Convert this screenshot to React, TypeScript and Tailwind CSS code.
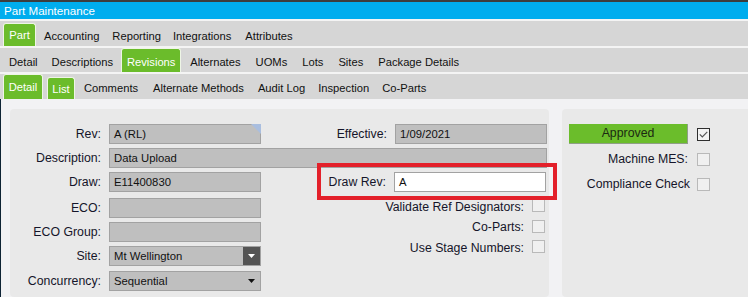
import React from "react";

const CB = ({ checked = false }: { checked?: boolean }) =>
  checked ? (
    <div className="flex h-[13px] w-[13px] shrink-0 items-center justify-center border border-[#2e2e2e] bg-[#f3f3f3]">
      <svg width="9" height="7" viewBox="0 0 9 7">
        <path d="M0.8 3.4 L3.3 5.9 L8.3 0.8" fill="none" stroke="#555" strokeWidth="1.2" />
      </svg>
    </div>
  ) : (
    <div className="h-[13px] w-[13px] shrink-0 border border-[#b9b9b9] bg-[#f0f0f0]" />
  );

const Input = ({
  w,
  value,
  white = false,
  children,
}: {
  w: string;
  value?: string;
  white?: boolean;
  children?: React.ReactNode;
}) => (
  <div
    className={`relative flex h-[20px] shrink-0 items-center border border-[#a2a2a2] pl-[4px] text-[11.3px] text-[#111] ${w} ${
      white ? "bg-white" : "bg-[#bfbfbf]"
    }`}
  >
    {value}
    {children}
  </div>
);

const Label = ({ w, children }: { w: string; children: React.ReactNode }) => (
  <div className={`shrink-0 text-right text-[12.3px] text-[#15152a] ${w}`}>{children}</div>
);

const Tab = ({ children, className = "" }: { children: React.ReactNode; className?: string }) => (
  <div
    className={`flex justify-center rounded-t-[3px] border border-b-0 border-[#eef5e6] bg-[#6bbc2b] leading-[14px] text-white ${className}`}
  >
    {children}
  </div>
);

export default function App() {
  return (
    <div className="h-[297px] w-[748px] overflow-hidden bg-[#f2f2f4] font-['Liberation_Sans',Arial,sans-serif]">
      <div className="h-[2px] bg-[#3d3d3d]" />
      <div className="h-[17px] bg-[#00adee] pl-[4px] text-[11.6px] leading-[17px] text-white">Part Maintenance</div>
      <div className="h-[2px] bg-[#f4f4f4]" />

      {/* Row 1 */}
      <div className="flex h-[25px] bg-[#d6d6d6] pl-[3px] text-[11.2px] text-[#111]">
        <Tab className="mt-[2px] w-[33px] pt-[4px]">Part</Tab>
        <div className="ml-[8px] mt-[8px] leading-[14px]">Accounting</div>
        <div className="ml-[13px] mt-[8px] leading-[14px]">Reporting</div>
        <div className="ml-[12px] mt-[8px] leading-[14px]">Integrations</div>
        <div className="ml-[14px] mt-[8px] leading-[14px]">Attributes</div>
      </div>
      <div className="h-[2px] bg-[#f4f4f4]" />

      {/* Row 2 */}
      <div className="flex h-[24px] bg-[#d6d6d6] pl-[9px] text-[11.2px] text-[#111]">
        <div className="mt-[7px] leading-[14px]">Detail</div>
        <div className="ml-[14px] mt-[7px] leading-[14px]">Descriptions</div>
        <Tab className="ml-[8px] w-[60px] pt-[6px]">Revisions</Tab>
        <div className="ml-[9px] mt-[7px] leading-[14px]">Alternates</div>
        <div className="ml-[15px] mt-[7px] leading-[14px]">UOMs</div>
        <div className="ml-[15px] mt-[7px] leading-[14px]">Lots</div>
        <div className="ml-[15px] mt-[7px] leading-[14px]">Sites</div>
        <div className="ml-[15px] mt-[7px] leading-[14px]">Package Details</div>
      </div>
      <div className="h-[2px] bg-[#f4f4f4]" />

      {/* Row 3 */}
      <div className="flex h-[25px] bg-[#d6d6d6] pl-[3px] text-[11.2px] text-[#111]">
        <Tab className="w-[40px] pt-[5px]">Detail</Tab>
        <Tab className="ml-[4px] mt-[3px] w-[28px] pt-[4px]">List</Tab>
        <div className="ml-[9px] mt-[7px] leading-[14px]">Comments</div>
        <div className="ml-[15px] mt-[7px] leading-[14px]">Alternate Methods</div>
        <div className="ml-[14px] mt-[7px] leading-[14px]">Audit Log</div>
        <div className="ml-[13px] mt-[7px] leading-[14px]">Inspection</div>
        <div className="ml-[13px] mt-[7px] leading-[14px]">Co-Parts</div>
      </div>

      {/* Content */}
      <div className="flex h-[198px] border-l border-[#0f2436] pt-[10px]">
        {/* Left panel */}
        <div className="relative ml-[9px] w-[539px] shrink-0 rounded-[4px] bg-[#e9e9e9] pt-[15px]">
          <div className="flex items-center">
            <Label w="w-[91px]">Rev:</Label>
            <div className="ml-[8px]">
              <Input w="w-[152px]" value="A (RL)">
                <svg className="absolute right-[-1px] top-[-1px]" width="10" height="10" viewBox="0 0 10 10">
                  <polygon points="0,0 10,0 10,10" fill="#a9bedf" />
                </svg>
              </Input>
            </div>
            <Label w="w-[126px]">Effective:</Label>
            <div className="ml-[8px]">
              <Input w="w-[152px]" value="1/09/2021" />
            </div>
          </div>

          <div className="mt-[4px] flex items-center">
            <Label w="w-[91px]">Description:</Label>
            <div className="ml-[8px]">
              <Input w="w-[438px]" value="Data Upload" />
            </div>
          </div>

          <div className="mt-[4px] flex">
            <div className="flex flex-col">
              <div className="flex items-center">
                <Label w="w-[91px]">Draw:</Label>
                <div className="ml-[8px]">
                  <Input w="w-[152px]" value="E11400830" />
                </div>
              </div>
              <div className="mt-[6px] flex items-center">
                <Label w="w-[91px]">ECO:</Label>
                <div className="ml-[8px]">
                  <Input w="w-[152px]" />
                </div>
              </div>
              <div className="mt-[4px] flex items-center">
                <Label w="w-[91px]">ECO Group:</Label>
                <div className="ml-[8px]">
                  <Input w="w-[152px]" />
                </div>
              </div>
              <div className="mt-[4px] flex items-center">
                <Label w="w-[91px]">Site:</Label>
                <div className="ml-[8px]">
                  <Input w="w-[152px]" value="Mt Wellington">
                    <div className="absolute bottom-0 right-0 top-0 flex w-[17px] items-center justify-center bg-[#545454]">
                      <svg width="7" height="4" viewBox="0 0 7 4">
                        <polygon points="0,0 7,0 3.5,4" fill="#fff" />
                      </svg>
                    </div>
                  </Input>
                </div>
              </div>
              <div className="mt-[5px] flex items-center">
                <Label w="w-[91px]">Concurrency:</Label>
                <div className="ml-[8px]">
                  <Input w="w-[152px]" value="Sequential">
                    <div className="absolute bottom-0 right-0 top-0 flex w-[17px] items-center justify-center">
                      <svg width="7" height="4" viewBox="0 0 7 4">
                        <polygon points="0,0 7,0 3.5,4" fill="#111" />
                      </svg>
                    </div>
                  </Input>
                </div>
              </div>
            </div>

            <div className="flex flex-col">
              <div className="flex items-center">
                <Label w="w-[125px]">Draw Rev:</Label>
                <div className="ml-[8px]">
                  <Input w="w-[152px]" value="A" white />
                </div>
              </div>
              <div className="mt-[3.5px] flex flex-col">
                <div className="flex h-[20.5px] items-center justify-end pr-[1px]">
                  <span className="pt-[2px] text-[12.3px] text-[#15152a]">Validate Ref Designators:</span>
                  <div className="ml-[8px]">
                    <CB />
                  </div>
                </div>
                <div className="flex h-[20.5px] items-center justify-end pr-[1px]">
                  <span className="pt-[2px] text-[12.3px] text-[#15152a]">Co-Parts:</span>
                  <div className="ml-[8px]">
                    <CB />
                  </div>
                </div>
                <div className="flex h-[20.5px] items-center justify-end pr-[1px]">
                  <span className="pt-[2px] text-[12.3px] text-[#15152a]">Use Stage Numbers:</span>
                  <div className="ml-[8px]">
                    <CB />
                  </div>
                </div>
              </div>
            </div>
          </div>

          {/* red highlight */}
          <div className="pointer-events-none absolute left-[307px] top-[54px] h-[37px] w-[240px] border-4 border-[#e3202a]" />
        </div>

        {/* Right panel */}
        <div className="ml-[13px] w-[200px] shrink-0 rounded-[4px] bg-[#e9e9e9] pl-[7px] pt-[15px]">
          <div className="flex items-center">
            <div className="flex h-[20px] w-[119px] items-center justify-center border-b border-r border-[#8f9f86] bg-[#6bbd2b] text-[12.3px] text-[#1b2a12]">
              Approved
            </div>
            <div className="ml-[9px]">
              <CB checked />
            </div>
          </div>
          <div className="mt-[5px] flex h-[20px] items-center">
            <div className="w-[119px] text-right text-[12.3px] text-[#15152a]">Machine MES:</div>
            <div className="ml-[9px]">
              <CB />
            </div>
          </div>
          <div className="mt-[5.5px] flex h-[20px] items-center">
            <div className="w-[121px] text-right text-[12.3px] text-[#15152a]">Compliance Check</div>
            <div className="ml-[7px]">
              <CB />
            </div>
          </div>
        </div>
      </div>
    </div>
  );
}
